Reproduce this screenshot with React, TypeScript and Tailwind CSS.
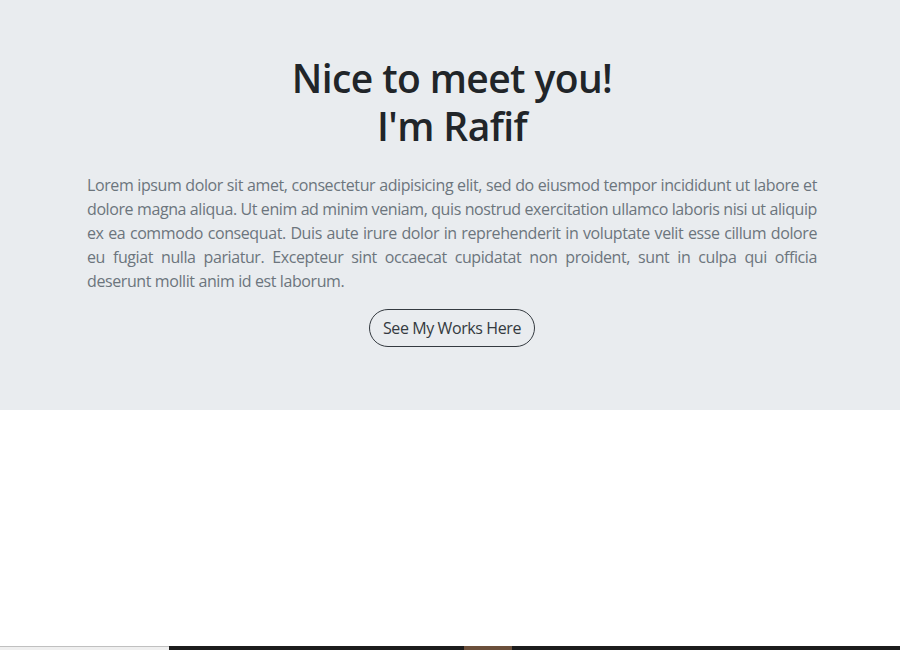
import React from "react";

const intro =
  "Lorem ipsum dolor sit amet, consectetur adipisicing elit, sed do eiusmod tempor incididunt ut labore et dolore magna aliqua. Ut enim ad minim veniam, quis nostrud exercitation ullamco laboris nisi ut aliquip ex ea commodo consequat. Duis aute irure dolor in reprehenderit in voluptate velit esse cillum dolore eu fugiat nulla pariatur. Excepteur sint occaecat cupidatat non proident, sunt in culpa qui officia deserunt mollit anim id est laborum.";

export default function App() {
  return (
    <div className="min-h-screen bg-white font-['Open_Sans','Liberation_Sans',sans-serif]">
      {/* jumbotron */}
      <section className="bg-[#e9ecef] pt-[54px] pb-[63px]">
        <div className="w-[730px] ml-[87px] flex flex-col items-center">
          <h1 className="text-[39px] leading-[48px] font-semibold text-[#212529] text-center tracking-[-0.6px]">
            Nice to meet you!
            <br />
            I'm Rafif
          </h1>
          <p className="mt-[23px] text-base leading-6 text-[#6c757d] text-justify tracking-[-0.4px]">
            {intro}
          </p>
          <button className="mt-4 px-[13px] py-[6px] border border-[#343a40] rounded-full text-base leading-6 text-[#343a40] tracking-[-0.4px]">
            See My Works Here
          </button>
        </div>
      </section>

      <div className="h-[236px]" />

      {/* next section peeking in */}
      <div className="flex h-[200px]">
        <div className="w-[169px] bg-[#efefef] border-t border-[#c0c0c0]" />
        <div className="flex-1 flex bg-[#1c1c1c]">
          <div className="w-[295px]" />
          <div className="w-[48px] bg-[#6b4f3a]" />
        </div>
      </div>
    </div>
  );
}
